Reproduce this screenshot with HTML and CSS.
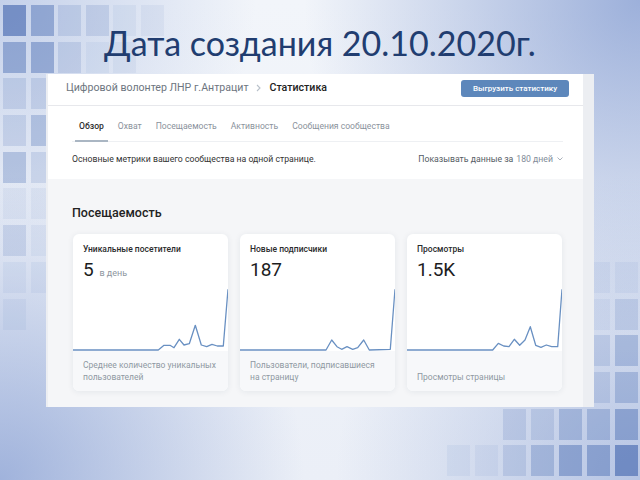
FILE: index.html
```html
<!DOCTYPE html>
<html lang="ru">
<head>
<meta charset="utf-8">
<title>Дата создания</title>
<link rel="stylesheet" href="styles.css">
</head>
<body>
<div class="decor decor-left">
  <i class="l5"></i><i class="l4"></i><i class="l2"></i><i class="l2"></i><i class="l1"></i><i class="l1"></i>
  <i class="l4"></i><i class="l4"></i><i class="l2"></i><i class="l1"></i><i class="l1"></i><i></i>
  <i class="l2"></i><i class="l2"></i><i></i><i></i><i></i><i></i>
  <i class="l2"></i><i class="l3"></i><i></i><i></i><i></i><i></i>
  <i class="l3"></i><i class="l2"></i><i></i><i></i><i></i><i></i>
  <i class="l1"></i><i class="l1"></i><i></i><i></i><i></i><i></i>
  <i class="l2"></i><i class="l1"></i><i></i><i></i><i></i><i></i>
  <i class="l1"></i><i class="l1"></i><i></i><i></i><i></i><i></i>
  <i class="l1"></i><i></i><i></i><i></i><i></i><i></i>
</div>
<div class="decor decor-right">
  <i></i><i></i><i></i><i></i><i></i><i class="l1"></i><i class="l1"></i>
  <i></i><i></i><i></i><i></i><i></i><i class="l1"></i><i class="l2"></i>
  <i></i><i></i><i></i><i></i><i></i><i class="l2"></i><i class="l3"></i>
  <i></i><i></i><i></i><i></i><i></i><i class="l2"></i><i class="l3"></i>
  <i></i><i></i><i class="l2"></i><i class="l2"></i><i class="l3"></i><i class="l3"></i><i class="l4"></i>
  <i class="l1"></i><i class="l1"></i><i class="l2"></i><i class="l3"></i><i class="l4"></i><i class="l4"></i><i class="l5"></i>
</div>

<div class="slide">
  <h1 class="title">Дата создания 20.10.2020г.</h1>

  <div class="window">
    <div class="panel">
      <div class="head">
        <div class="crumbs">
          <span class="crumb">Цифровой волонтер ЛНР г.Антрацит</span>
          <svg class="crumb-sep" width="5" height="8" viewBox="0 0 5 8"><path d="M1 1l3 3-3 3" fill="none" stroke="#b8c0ca" stroke-width="1.1"/></svg>
          <span class="crumb-current">Статистика</span>
        </div>
        <button class="btn">Выгрузить статистику</button>
      </div>

      <div class="top">
        <nav class="tabs">
          <span class="tab active">Обзор</span>
          <span class="tab">Охват</span>
          <span class="tab">Посещаемость</span>
          <span class="tab">Активность</span>
          <span class="tab">Сообщения сообщества</span>
        </nav>
        <div class="desc">
          <span>Основные метрики вашего сообщества на одной странице.</span>
          <span class="period">Показывать данные за <span class="period-val">180 дней</span>
            <svg class="caret" width="6" height="4" viewBox="0 0 6 4"><path d="M0.5 0.5l2.5 2.5 2.5-2.5" fill="none" stroke="#a0a8b2" stroke-width="0.9"/></svg>
          </span>
        </div>
      </div>

      <div class="body">
        <h2 class="section-title">Посещаемость</h2>
        <div class="cards">
          <div class="card">
            <div class="card-title">Уникальные посетители</div>
            <div class="card-value">5 <span class="unit">в день</span></div>
            <svg class="chart" width="155" height="70" viewBox="0 0 155 70"><polyline points="0,69 85.3,69 91,64.3 97,64.3 101,66.7 106.3,58.3 111,64 116.3,62.7 122.3,44.3 128.3,64 133.7,65.7 139,63.3 144.3,65 150.3,65 155,8.3"/></svg>
            <div class="card-foot">Среднее количество уникальных пользователей</div>
          </div>
          <div class="card">
            <div class="card-title">Новые подписчики</div>
            <div class="card-value">187</div>
            <svg class="chart" width="155" height="70" viewBox="0 0 155 70"><polyline points="0,69 86,69 91.7,59 97,65.7 101.7,68.3 107,65.7 112.7,68.3 117.7,66.7 123.7,59 129.3,69 150.3,68.3 155,8.3"/></svg>
            <div class="card-foot">Пользователи, подписавшиеся на страницу</div>
          </div>
          <div class="card">
            <div class="card-title">Просмотры</div>
            <div class="card-value">1.5K</div>
            <svg class="chart" width="155" height="70" viewBox="0 0 155 70"><polyline points="0,69 85.7,69 91.3,62.3 96.7,65 102,65.7 107.3,58.3 112.7,64.3 118,59 123.3,45.7 128.7,64.3 134,66.3 139.3,64 144.7,65.7 150.7,65.7 155,8.3"/></svg>
            <div class="card-foot">Просмотры страницы</div>
          </div>
        </div>
      </div>
    </div>
  </div>
</div>
</body>
</html>
```

FILE: styles.css
```css
* { box-sizing: border-box; }

html, body {
  margin: 0;
  padding: 0;
}

body {
  width: 640px;
  height: 480px;
  overflow: hidden;
  position: relative;
  font-family: Roboto, "Noto Sans", sans-serif;
  background:
    radial-gradient(circle at 100% 0%, rgba(128, 153, 208, 0.75), rgba(128, 153, 208, 0) 42%),
    radial-gradient(circle at 0% 100%, rgba(128, 153, 208, 0.7), rgba(128, 153, 208, 0) 38%),
    radial-gradient(circle at 0% 0%, rgba(150, 172, 218, 0.5), rgba(150, 172, 218, 0) 32%),
    radial-gradient(circle at 100% 100%, rgba(128, 153, 208, 0.5), rgba(128, 153, 208, 0) 38%),
    linear-gradient(180deg, #f2f5fa 0%, #ebeff7 100%);
}

/* decorative tiles of the slide template */
.decor {
  position: absolute;
  display: grid;
  grid-auto-rows: 31px;
  row-gap: 5.7px;
  z-index: 0;
}
.decor i {
  display: block;
  background: rgb(74, 108, 178);
  opacity: 0;
}
.decor i.l1 { opacity: 0.07; }
.decor i.l2 { opacity: 0.17; }
.decor i.l3 { opacity: 0.3; }
.decor i.l4 { opacity: 0.46; }
.decor i.l5 { opacity: 0.66; }

.decor-left {
  left: 3px;
  top: 5px;
  grid-template-columns: repeat(6, 23px);
  column-gap: 4.5px;
}
.decor-right {
  left: 447px;
  top: 262px;
  grid-template-columns: repeat(7, 23px);
  column-gap: 5px;
}

.slide {
  position: relative;
  z-index: 1;
}

.title {
  margin: 0;
  height: 74px;
  padding-top: 26px;
  line-height: 34px;
  text-align: center;
  font-family: Lato, "Open Sans", sans-serif;
  font-weight: 400;
  font-size: 34px;
  color: #213d70;
}

.window {
  margin-left: 46px;
  width: 548px;
  height: 333px;
  background: #eceef2;
  padding: 0 11px 0 2px;
  display: flex;
}

.panel {
  flex: 1;
  background: #f5f6f8;
  display: flex;
  flex-direction: column;
}

.head {
  height: 32px;
  background: #fff;
  border-bottom: 1px solid #e7e8ec;
  display: flex;
  align-items: center;
  justify-content: space-between;
  padding: 0 14px 3px 18px;
}

.crumbs {
  display: flex;
  align-items: center;
  font-size: 10.6px;
  line-height: 14px;
}
.crumb { color: #6d7580; }
.crumb-sep { margin: 0 8px 0 8px; }
.crumb-current { color: #222; font-weight: 500; }

.btn {
  height: 17px;
  width: 108px;
  border: 0;
  border-radius: 3px;
  background: #5d87bb;
  color: #fff;
  font-family: Roboto, sans-serif;
  font-size: 8px;
  font-weight: 500;
  padding: 0;
  margin-top: 1px;
}

.top {
  background: #fff;
  padding: 0 20px 0 24px;
}

.tabs {
  display: flex;
  gap: 6px;
  border-bottom: 1px solid #eef0f3;
  padding-left: 3px;
}
.tab {
  font-size: 8.6px;
  line-height: 12px;
  padding: 14px 4px 8px;
  color: #8a929c;
  border-bottom: 2px solid transparent;
  margin-bottom: -1px;
}
.tab.active {
  color: #2c2d2e;
  font-weight: 500;
  border-bottom-color: #aab6c3;
}

.desc {
  display: flex;
  justify-content: space-between;
  align-items: center;
  font-size: 8.7px;
  line-height: 12px;
  color: #333;
  padding: 11px 0 14px 0;
}
.period { color: #555c64; display: flex; align-items: center; }
.period-val { color: #818c99; margin-left: 3px; }
.caret { margin-left: 4px; }

.body {
  padding: 26px 21px 0 25px;
}

.section-title {
  margin: 0 0 13px -1px;
  font-size: 12.5px;
  line-height: 16px;
  font-weight: 500;
  color: #222;
}

.cards {
  display: grid;
  grid-template-columns: repeat(3, 155px);
  column-gap: 12px;
}

.card {
  height: 157px;
  background: #fff;
  border-radius: 6px;
  overflow: hidden;
  box-shadow: 0 1px 6px rgba(30, 50, 80, 0.08);
  display: flex;
  flex-direction: column;
}

.card-title {
  padding: 10px 10px 0;
  font-size: 8.5px;
  line-height: 10px;
  font-weight: 500;
  color: #2a2b2c;
}

.card-value {
  margin-top: 5px;
  padding: 0 10px;
  height: 22px;
  line-height: 22px;
  font-size: 19px;
  color: #1c1d1e;
}
.unit {
  font-size: 9px;
  color: #8d96a0;
  margin-left: 1px;
}

.chart {
  display: block;
  flex: none;
}
.chart polyline {
  fill: none;
  stroke: #6990c2;
  stroke-width: 1.3;
  stroke-linejoin: round;
}

.card-foot {
  flex: 1;
  background: #f7f8fa;
  display: flex;
  align-items: flex-end;
  padding: 0 12px 8px 10px;
  font-size: 8.5px;
  line-height: 11.5px;
  color: #8f98a2;
}
```
